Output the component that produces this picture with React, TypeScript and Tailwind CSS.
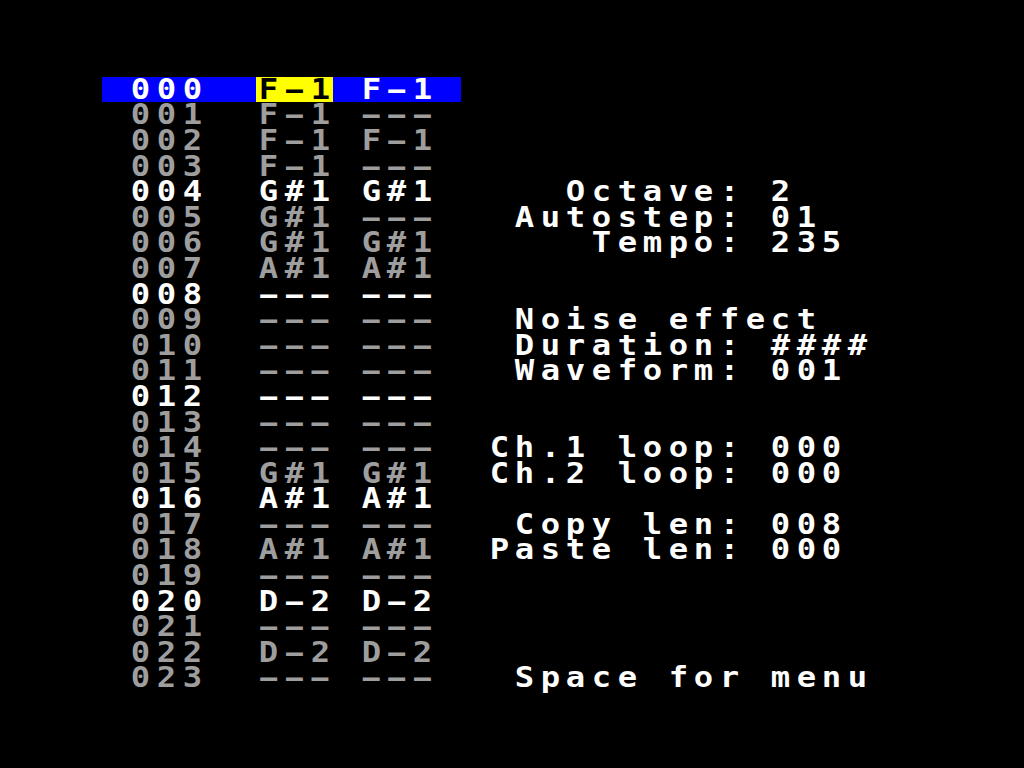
import clsx from "clsx";

// pattern rows: index, channel 1 note, channel 2 note
const pattern: [string, string][] = [
  ["F-1", "F-1"],
  ["F-1", "---"],
  ["F-1", "F-1"],
  ["F-1", "---"],
  ["G#1", "G#1"],
  ["G#1", "---"],
  ["G#1", "G#1"],
  ["A#1", "A#1"],
  ["---", "---"],
  ["---", "---"],
  ["---", "---"],
  ["---", "---"],
  ["---", "---"],
  ["---", "---"],
  ["---", "---"],
  ["G#1", "G#1"],
  ["A#1", "A#1"],
  ["---", "---"],
  ["A#1", "A#1"],
  ["---", "---"],
  ["D-2", "D-2"],
  ["---", "---"],
  ["D-2", "D-2"],
  ["---", "---"],
];

const info: Record<number, string> = {
  4: "    Octave: 2",
  5: "  Autostep: 01",
  6: "     Tempo: 235",
  9: "  Noise effect",
  10: "  Duration: ####",
  11: "  Waveform: 001",
  14: " Ch.1 loop: 000",
  15: " Ch.2 loop: 000",
  17: "  Copy len: 008",
  18: " Paste len: 000",
  23: "  Space for menu",
};

const CURSOR_ROW = 0;

function Cell({ ch, className }: { ch: string; className?: string }) {
  if (ch === " ") return <span className={clsx("w-[25.6px] h-[25.6px] shrink-0", className)} />;
  return (
    <span className={clsx("w-[25.6px] h-[25.6px] flex justify-center shrink-0", className)}>
      <span className={clsx("inline-block", ch !== "-" && "scale-x-[1.15]")}>
        {ch === "-" ? "\u2013" : ch}
      </span>
    </span>
  );
}

function Row({ r }: { r: number }) {
  const [n1, n2] = pattern[r];
  const idx = String(r).padStart(3, "0");
  const left = (" " + idx + "  " + n1 + " " + n2 + " ").split("");
  const right = (info[r] ?? "").padEnd(18, " ").split("");
  const bright = r % 4 === 0;
  const active = r === CURSOR_ROW;

  return (
    <div className="flex h-[25.6px]">
      <div className={clsx("flex", active && "bg-[#0000ff]")}>
        {left.map((ch, i) => (
          <Cell
            key={i}
            ch={ch}
            className={clsx(
              active && i >= 6 && i <= 8
                ? "bg-[#ffff00] text-black"
                : bright
                  ? "text-white"
                  : "text-[#9e9e9e]"
            )}
          />
        ))}
      </div>
      <div className="flex text-white">
        {right.map((ch, i) => (
          <Cell key={i} ch={ch} />
        ))}
      </div>
    </div>
  );
}

export default function App() {
  return (
    <div className="w-[1024px] h-[768px] bg-black overflow-hidden pt-[76.8px] pl-[102.4px]">
      <div
        className="flex flex-col text-[28px] leading-[25.6px] font-bold"
        style={{ fontFamily: '"DejaVu Sans Mono", "Liberation Mono", monospace' }}
      >
        {pattern.map((_, r) => (
          <Row key={r} r={r} />
        ))}
      </div>
    </div>
  );
}
